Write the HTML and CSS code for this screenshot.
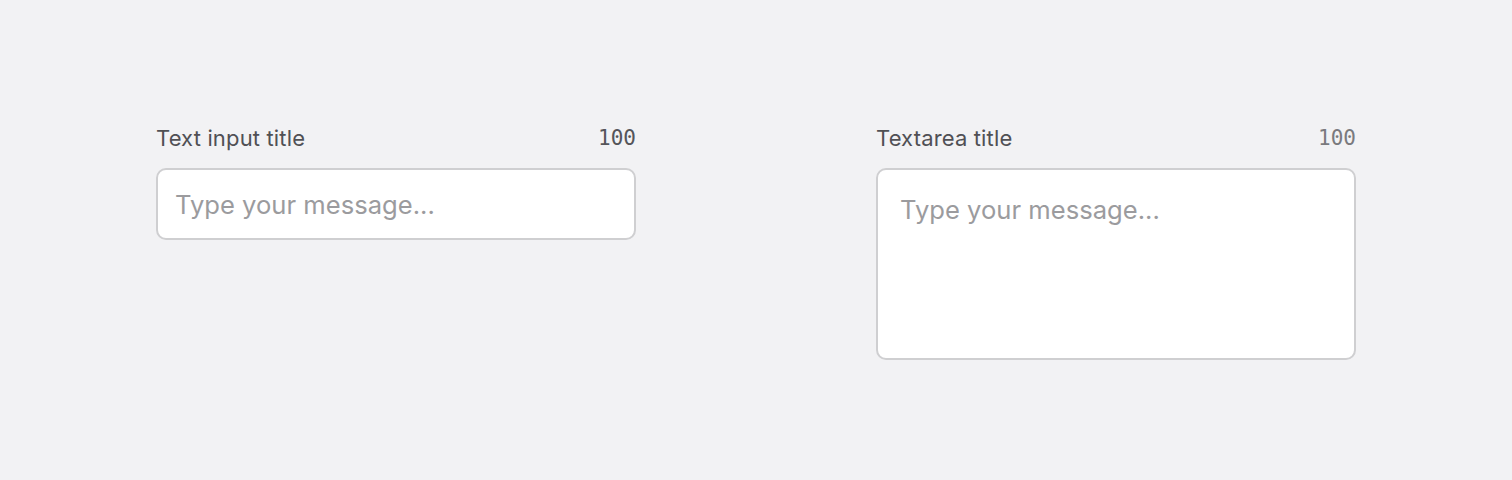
FILE: index.html
```html
<!DOCTYPE html>
<html>
<head>
<meta charset="utf-8">
<link rel="stylesheet" href="styles.css">
</head>
<body>
<main class="page">
  <div class="field">
    <div class="field-head">
      <label class="field-label">Text input title</label>
      <span class="field-count">100</span>
    </div>
    <input class="field-input" type="text" placeholder="Type your message...">
  </div>
  <div class="field">
    <div class="field-head">
      <label class="field-label">Textarea title</label>
      <span class="field-count field-count--light">100</span>
    </div>
    <textarea class="field-textarea" placeholder="Type your message..."></textarea>
  </div>
</main>
</body>
</html>
```

FILE: styles.css
```css
html, body {
  margin: 0;
  padding: 0;
  background: #f2f2f4;
  font-family: Inter, "Noto Sans", sans-serif;
}
.page {
  display: flex;
  justify-content: center;
  align-items: flex-start;
  gap: 240px;
  padding-top: 123px;
}
.field {
  width: 480px;
  display: flex;
  flex-direction: column;
  gap: 15px;
}
.field-head {
  display: flex;
  justify-content: space-between;
  align-items: center;
  height: 30px;
}
.field-label {
  font-size: 22px;
  letter-spacing: 0.15px;
  color: #505054;
}
.field-count {
  font-family: "DejaVu Sans Mono", monospace;
  font-size: 21px;
  color: #55555a;
}
.field-count--light {
  color: #7a7a7e;
}
.field-input, .field-textarea {
  box-sizing: border-box;
  width: 480px;
  margin: 0;
  border: 2px solid #cfcfd1;
  border-radius: 10px;
  background: #fff;
  font-family: Inter, "Noto Sans", sans-serif;
  font-size: 25.6px;
  color: #333;
  outline: none;
}
.field-input {
  height: 72px;
  padding: 0 17px;
}
.field-textarea {
  height: 192px;
  padding: 25px 22px;
  resize: none;
  line-height: 1.2;
}
.field-input::placeholder, .field-textarea::placeholder {
  color: #9b9b9e;
}
```
